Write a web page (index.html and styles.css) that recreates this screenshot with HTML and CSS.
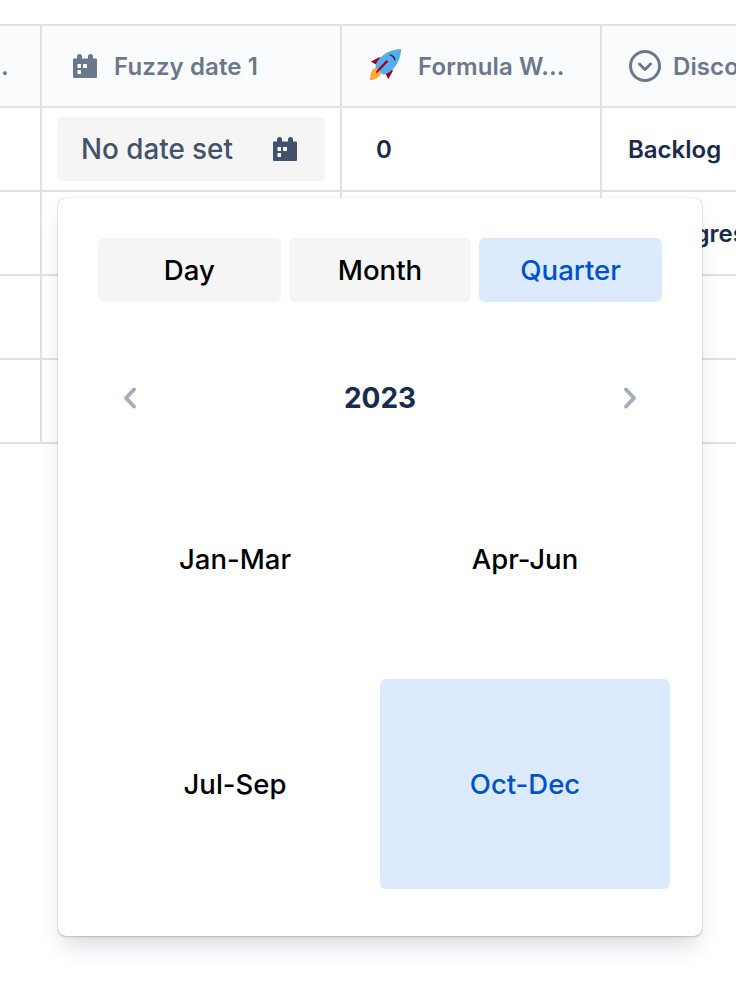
FILE: index.html
```html
<!DOCTYPE html>
<html lang="en">
<head>
<meta charset="utf-8">
<title>Fuzzy date picker</title>
<link rel="stylesheet" href="styles.css">
</head>
<body>
<svg class="defs" width="0" height="0" aria-hidden="true">
  <symbol id="cal" viewBox="0 0 24 24">
    <path fill="currentColor" fill-rule="evenodd" d="M1 4.500h3V2.500a2.500 2.500 0 0 1 5 0v2h6v-2a2.500 2.500 0 0 1 5 0v2h3a1 1 0 0 1 1 1V23a1 1 0 0 1-1 1H1a1 1 0 0 1-1-1V5.500a1 1 0 0 1 1-1ZM4.500 10v4h3.500v-4H4.500Zm5.500 0v4h4v-4h-4ZM4.500 16v4h3.500v-4H4.500Z"/>
  </symbol>
</svg>
<main class="table">
  <div class="row head">
    <div class="cell first"><span class="clip">...</span></div>
    <div class="cell col-date">
      <svg class="ico"><use href="#cal"/></svg><span class="title">Fuzzy date 1</span>
    </div>
    <div class="cell col-formula">
      <svg class="rocket" viewBox="0 0 36 36">
        <path fill="#A0041E" d="M2 15l9-5 6 2-7 7-8-4Zm19 19l5-9-2-6-7 7 4 8Z"/>
        <path fill="#FFAC33" d="M1 35c0-6 2-12 5-13 3-2 6 0 7 2 1 3 0 5-2 7-3 3-7 4-10 4Z"/>
        <path fill="#55ACEE" d="M35 1c-8 0-18 4-23 10-3 3-5 7-5 10l8 8c3 0 7-2 10-5 6-5 10-15 10-23Z"/>
        <path fill="#A0041E" d="M11 25l-3 3 0-3 11-12 2 2-10 10Z"/>
        <path fill="#292F33" d="M23 7c3 0 6 3 6 6l-1 1c-1-3-3-5-6-6l1-1Z"/>
      </svg><span class="title">Formula W...</span>
    </div>
    <div class="cell col-status">
      <svg class="ring" viewBox="0 0 32 32"><circle cx="16" cy="16" r="14.500" fill="none" stroke="currentColor" stroke-width="3"/><path d="M10.500 14l5.500 5.500 5.500-5.500" fill="none" stroke="currentColor" stroke-width="3" stroke-linecap="round" stroke-linejoin="round"/></svg><span class="title">Discovery</span>
    </div>
  </div>
  <div class="row">
    <div class="cell first"></div>
    <div class="cell col-date pad-tight">
      <div class="date-field"><span>No date set</span><svg class="ico"><use href="#cal"/></svg></div>
    </div>
    <div class="cell col-formula"><span class="value">0</span></div>
    <div class="cell col-status"><span class="value">Backlog</span></div>
  </div>
  <div class="row">
    <div class="cell first"></div>
    <div class="cell col-date"></div>
    <div class="cell col-formula"></div>
    <div class="cell col-status"><span class="value">In Progress</span></div>
  </div>
  <div class="row">
    <div class="cell first"></div>
    <div class="cell col-date"></div>
    <div class="cell col-formula"></div>
    <div class="cell col-status"></div>
  </div>
  <div class="row">
    <div class="cell first"></div>
    <div class="cell col-date"></div>
    <div class="cell col-formula"></div>
    <div class="cell col-status"></div>
  </div>
</main>
<section class="popup">
  <div class="tabs">
    <button class="tab">Day</button>
    <button class="tab">Month</button>
    <button class="tab on">Quarter</button>
  </div>
  <div class="nav">
    <svg class="chev" viewBox="0 0 16 26"><path d="M12 4.500 4 13l8 8.500" /></svg>
    <strong class="year">2023</strong>
    <svg class="chev" viewBox="0 0 16 26"><path d="M4 4.500 12 13l-8 8.500" /></svg>
  </div>
  <div class="quarters">
    <button class="q">Jan-Mar</button>
    <button class="q">Apr-Jun</button>
    <button class="q">Jul-Sep</button>
    <button class="q on">Oct-Dec</button>
  </div>
</section>
</body>
</html>
```
FILE: styles.css
```css
* { box-sizing: border-box; }
html, body { margin: 0; height: 100%; }
body {
  position: relative;
  width: 736px;
  height: 986px;
  overflow: hidden;
  background: #fff;
  font-family: Inter, "Liberation Sans", sans-serif;
  padding-top: 24px;
}
.defs { position: absolute; }
.table {
  border-top: 2px solid #DFE1E6;
  width: 736px;
  overflow: hidden;
}
.row {
  display: flex;
  height: 84px;
  border-bottom: 2px solid #DFE1E6;
}
.row.head { height: 82px; background: #FAFBFC; }
.cell {
  flex: none;
  display: flex;
  align-items: center;
  border-right: 2px solid #DFE1E6;
  min-width: 0;
}
.first { width: 42px; justify-content: flex-end; padding-right: 31px; }
.clip { color: #6B778C; font-size: 24px; font-weight: 600; letter-spacing: .4px; }
.col-date { width: 300px; padding-left: 31px; }
.col-formula { width: 260px; padding-left: 27px; }
.col-status { width: 200px; border-right: 0; padding-left: 27px; white-space: nowrap; }
.title { font-size: 24px; font-weight: 600; color: #6B778C; white-space: nowrap; letter-spacing: .1px; }
.ico { width: 24px; height: 24px; flex: none; color: #6B778C; }
.head .col-date .title { margin-left: 17px; }
.rocket { width: 33px; height: 33px; margin-right: 16px; flex: none; margin-top: -4px; }
.ring { width: 32px; height: 32px; margin-right: 12px; flex: none; color: #6B778C; }
.value { font-size: 24px; font-weight: 600; color: #172B4D; }
.col-formula .value { margin-left: 7px; }
.col-status .value { margin-left: -1px; }
.pad-tight { padding-left: 15px; }
.date-field {
  width: 268px;
  height: 64px;
  background: #F5F5F5;
  border-radius: 6px;
  display: flex;
  align-items: center;
  justify-content: space-between;
  padding: 0 28px 0 24px;
  color: #42526E;
  font-size: 27.800px;
  font-weight: 500;
}
.date-field .ico { color: #42526E; }
.popup {
  position: absolute;
  left: 58px;
  top: 198px;
  width: 644px;
  height: 738px;
  padding: 40px;
  background: #fff;
  border-radius: 8px;
  box-shadow: 0 0 1px rgba(9, 30, 66, .4), 0 1px 2px rgba(9, 30, 66, .18), 0 14px 24px -6px rgba(9, 30, 66, .18);
}
button {
  font: inherit;
  border: 0;
  cursor: pointer;
}
.tabs {
  display: grid;
  grid-template-columns: repeat(3, 1fr);
  gap: 8px;
}
.tab {
  height: 64px;
  background: #F5F5F5;
  border-radius: 6px;
  color: #000;
  font-size: 27.600px;
  font-weight: 500;
}
.tab.on { background: #DCEAFD; color: #0052CC; }
.nav {
  margin-top: 40px;
  height: 112px;
  padding: 0 24px;
  display: flex;
  justify-content: space-between;
  align-items: flex-start;
}
.chev {
  width: 16px;
  height: 26px;
  margin-top: 43px;
  fill: none;
  stroke: #A5ADBA;
  stroke-width: 4;
  stroke-linecap: round;
  stroke-linejoin: round;
}
.year {
  margin-top: 38px;
  line-height: 36px;
  font-size: 28px;
  font-weight: 700;
  color: #172B4D;
}
.quarters {
  margin: 0 -8px;
  display: grid;
  grid-template-columns: repeat(2, 290px);
  grid-auto-rows: 210px;
  row-gap: 15px;
}
.q {
  background: #fff;
  border-radius: 6px;
  color: #000;
  font-size: 27.500px;
  font-weight: 500;
}
.q.on { background: #DCEAFD; color: #0052CC; }
```
